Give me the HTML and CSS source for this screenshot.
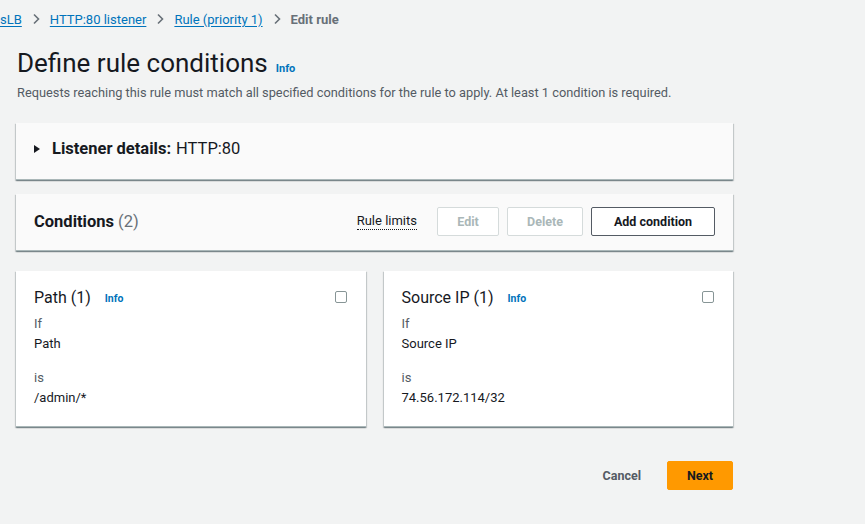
FILE: index.html
```html
<!DOCTYPE html>
<html>
<head>
<meta charset="utf-8">
<link rel="stylesheet" href="styles.css">
</head>
<body>
<div class="page">
  <nav class="crumbs">
    <a class="crumb-link" href="#">sLB</a>
    <svg class="chev" width="10" height="12" viewBox="0 0 10 12"><path d="M3 1.5 L7.5 6 L3 10.5" fill="none" stroke="#687078" stroke-width="1.6"/></svg>
    <a class="crumb-link" href="#">HTTP:80 listener</a>
    <svg class="chev" width="10" height="12" viewBox="0 0 10 12"><path d="M3 1.5 L7.5 6 L3 10.5" fill="none" stroke="#687078" stroke-width="1.6"/></svg>
    <a class="crumb-link" href="#">Rule (priority 1)</a>
    <svg class="chev" width="10" height="12" viewBox="0 0 10 12"><path d="M3 1.5 L7.5 6 L3 10.5" fill="none" stroke="#687078" stroke-width="1.6"/></svg>
    <span class="crumb-current">Edit rule</span>
  </nav>

  <main class="content">
    <header class="page-head">
      <h1 class="title">Define rule conditions <a class="info" href="#">Info</a></h1>
      <p class="desc">Requests reaching this rule must match all specified conditions for the rule to apply. At least 1 condition is required.</p>
    </header>

    <section class="panel">
      <div class="panel-head listener-head">
        <span class="caret"></span>
        <span class="panel-title">Listener details:</span>
        <span class="panel-value">HTTP:80</span>
      </div>
    </section>

    <section class="panel">
      <div class="panel-head cond-head">
        <h2 class="cond-title">Conditions <span class="count">(2)</span></h2>
        <div class="actions">
          <span class="limits">Rule limits</span>
          <button class="btn btn-disabled btn-edit">Edit</button>
          <button class="btn btn-disabled btn-delete">Delete</button>
          <button class="btn btn-normal">Add condition</button>
        </div>
      </div>
    </section>

    <div class="cards">
      <div class="card">
        <div class="card-head">
          <span class="card-title">Path (1)</span>
          <a class="info card-info" href="#">Info</a>
          <span class="checkbox"></span>
        </div>
        <div class="label">If</div>
        <div class="value">Path</div>
        <div class="label label-is">is</div>
        <div class="value">/admin/*</div>
      </div>
      <div class="card">
        <div class="card-head">
          <span class="card-title">Source IP (1)</span>
          <a class="info card-info" href="#">Info</a>
          <span class="checkbox"></span>
        </div>
        <div class="label">If</div>
        <div class="value">Source IP</div>
        <div class="label label-is">is</div>
        <div class="value">74.56.172.114/32</div>
      </div>
    </div>

    <div class="footer">
      <button class="btn-link">Cancel</button>
      <button class="btn-primary">Next</button>
    </div>
  </main>
</div>
</body>
</html>
```

FILE: styles.css
```css
* { box-sizing: border-box; }
html, body {
  margin: 0;
  padding: 0;
  background: #f2f3f3;
}
body {
  font-family: Roboto, "Open Sans", Arial, sans-serif;
  color: #16191f;
  width: 865px;
  height: 524px;
  overflow: hidden;
}
.page {
  padding-top: 10px;
}
.crumbs {
  display: flex;
  align-items: center;
  height: 18px;
  font-size: 13px;
  gap: 9px;
}
.crumb-link {
  color: #0073bb;
  text-decoration: underline;
  text-underline-offset: 2px;
}
.chev { flex: none; }
.crumb-current {
  color: #687078;
  font-weight: 700;
}
.content {
  margin-left: 16px;
  width: 717px;
}
.page-head {
  padding-top: 20px;
}
.title {
  margin: 0;
  font-size: 26px;
  font-weight: 400;
  line-height: 30px;
  height: 30px;
  display: flex;
  align-items: baseline;
  gap: 8px;
  padding-left: 1px;
}
.info {
  color: #0073bb;
  font-size: 11px;
  font-weight: 700;
  text-decoration: none;
}
.desc {
  margin: 7px 0 0 1px;
  font-size: 12.8px;
  line-height: 16px;
  color: #545b64;
}
.panel {
  background: #fafafa;
  margin-top: 22px;
  box-shadow: 0 1px 1px 0 rgba(0,28,36,.3), 1px 1px 1px 0 rgba(0,28,36,.15), -1px 1px 1px 0 rgba(0,28,36,.15);
  border-bottom: 1px solid #aab7b8;
}
.panel + .panel { margin-top: 14px; }
.panel-head {
  height: 56px;
  display: flex;
  align-items: center;
  padding: 0 18px;
  font-size: 16.5px;
}
.listener-head {
  padding-bottom: 6px;
}
.caret {
  width: 0; height: 0;
  border-left: 6px solid #16191f;
  border-top: 4px solid transparent;
  border-bottom: 4px solid transparent;
  margin-right: 12px;
  margin-top: 1px;
}
.panel-title { font-weight: 700; margin-right: 5px; }
.cond-head { justify-content: space-between; padding-bottom: 1px; }
.cond-title {
  margin: 0;
  font-size: 16.5px;
  font-weight: 700;
}
.count { font-weight: 400; color: #687078; }
.actions {
  display: flex;
  align-items: center;
  gap: 8px;
}
.limits {
  font-size: 13px;
  border-bottom: 1px dotted #16191f;
  margin-right: 12px;
  line-height: 16px;
}
.btn {
  font-family: inherit;
  font-size: 12.5px;
  font-weight: 700;
  height: 29px;
  padding: 0 0 1px 0;
  border-radius: 2px;
  background: #ffffff;
}
.btn-disabled {
  color: #aab7b8;
  border: 1px solid #d5dbdb;
}
.btn-edit { width: 62px; }
.btn-delete { width: 76px; }
.btn-normal {
  color: #16191f;
  border: 1px solid #545b64;
  width: 124px;
}
.cards {
  display: flex;
  gap: 18px;
  margin-top: 20px;
}
.card {
  flex: 1;
  background: #ffffff;
  height: 156px;
  padding: 17px 18px 0 18px;
  box-shadow: 0 1px 1px 0 rgba(0,28,36,.3), 1px 1px 1px 0 rgba(0,28,36,.15), -1px 1px 1px 0 rgba(0,28,36,.15);
  border-bottom: 1px solid #aab7b8;
}
.card-head {
  display: flex;
  align-items: center;
  height: 18px;
}
.card-title { font-size: 16px; }
.card-info { margin-left: 14px; font-size: 10.5px; margin-top: 2px; }
.checkbox {
  margin-left: auto;
  width: 12px;
  height: 12px;
  border: 1px solid #879596;
  border-radius: 2px;
  margin-right: 1px;
}
.label {
  font-size: 13px;
  color: #545b64;
  margin-top: 10px;
  line-height: 16px;
}
.label-is { margin-top: 18px; }
.value {
  font-size: 13px;
  line-height: 16px;
  margin-top: 4px;
}
.footer {
  display: flex;
  justify-content: flex-end;
  align-items: center;
  gap: 26px;
  margin-top: 34px;
}
.btn-link {
  background: none;
  border: none;
  font-family: inherit;
  font-size: 12.5px;
  font-weight: 700;
  color: #545b64;
  padding: 0;
}
.btn-primary {
  background: #ff9900;
  border: 1px solid #ff9900;
  border-radius: 2px;
  width: 66px;
  height: 29px;
  font-family: inherit;
  font-size: 12.5px;
  font-weight: 700;
  color: #16191f;
}
```
